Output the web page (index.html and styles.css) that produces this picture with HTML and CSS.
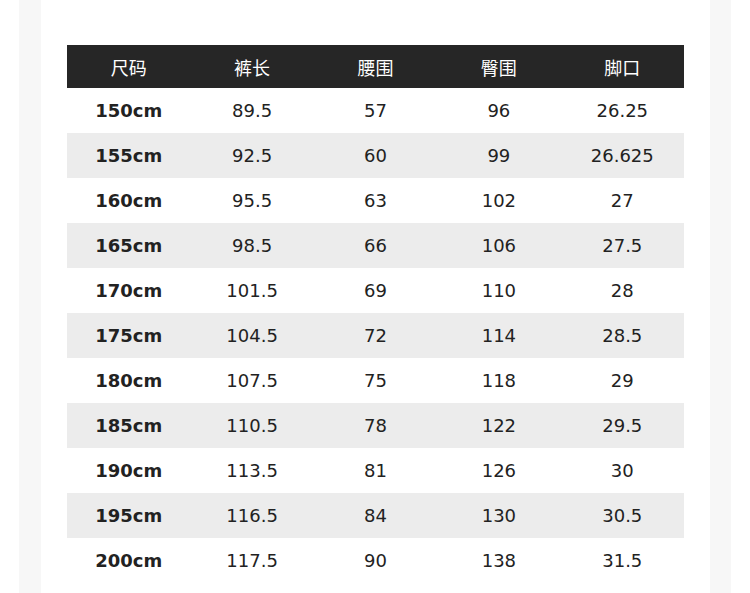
FILE: index.html
```html
<!DOCTYPE html>
<html lang="zh">
<head>
<meta charset="utf-8">
<link rel="stylesheet" href="styles.css">
</head>
<body>
<div class="frame">
  <div class="card">
    <table class="size-table">
      <thead>
        <tr><th>尺码</th><th>裤长</th><th>腰围</th><th>臀围</th><th>脚口</th></tr>
      </thead>
      <tbody>
        <tr><td class="size">150cm</td><td>89.5</td><td>57</td><td>96</td><td>26.25</td></tr>
        <tr><td class="size">155cm</td><td>92.5</td><td>60</td><td>99</td><td>26.625</td></tr>
        <tr><td class="size">160cm</td><td>95.5</td><td>63</td><td>102</td><td>27</td></tr>
        <tr><td class="size">165cm</td><td>98.5</td><td>66</td><td>106</td><td>27.5</td></tr>
        <tr><td class="size">170cm</td><td>101.5</td><td>69</td><td>110</td><td>28</td></tr>
        <tr><td class="size">175cm</td><td>104.5</td><td>72</td><td>114</td><td>28.5</td></tr>
        <tr><td class="size">180cm</td><td>107.5</td><td>75</td><td>118</td><td>29</td></tr>
        <tr><td class="size">185cm</td><td>110.5</td><td>78</td><td>122</td><td>29.5</td></tr>
        <tr><td class="size">190cm</td><td>113.5</td><td>81</td><td>126</td><td>30</td></tr>
        <tr><td class="size">195cm</td><td>116.5</td><td>84</td><td>130</td><td>30.5</td></tr>
        <tr><td class="size">200cm</td><td>117.5</td><td>90</td><td>138</td><td>31.5</td></tr>
      </tbody>
    </table>
  </div>
</div>
</body>
</html>
```

FILE: styles.css
```css
html, body {
  margin: 0;
  padding: 0;
  background: #ffffff;
}
body {
  height: 593px;
  overflow: hidden;
  font-family: "DejaVu Sans", "Noto Sans CJK SC", sans-serif;
}
.frame {
  margin-left: 19px;
  width: 669px;
  padding: 0 21px 0 22px;
  background: #f7f7f7;
  height: 593px;
}
.card {
  background: #ffffff;
  height: 593px;
  padding: 45px 26px 0 26px;
  box-sizing: border-box;
}
.size-table {
  width: 617px;
  border-collapse: collapse;
  table-layout: fixed;
}
.size-table th {
  height: 43px;
  padding: 0;
  background: #262626;
  color: #ffffff;
  font-family: "Noto Sans CJK SC", sans-serif;
  font-weight: 400;
  font-size: 18px;
  text-align: center;
}
.size-table td {
  height: 45px;
  padding: 0;
  text-align: center;
  font-size: 18px;
  color: #222222;
}
.size-table tbody tr:nth-child(even) td {
  background: #ececec;
}
.size-table td.size {
  font-weight: 700;
}
```
